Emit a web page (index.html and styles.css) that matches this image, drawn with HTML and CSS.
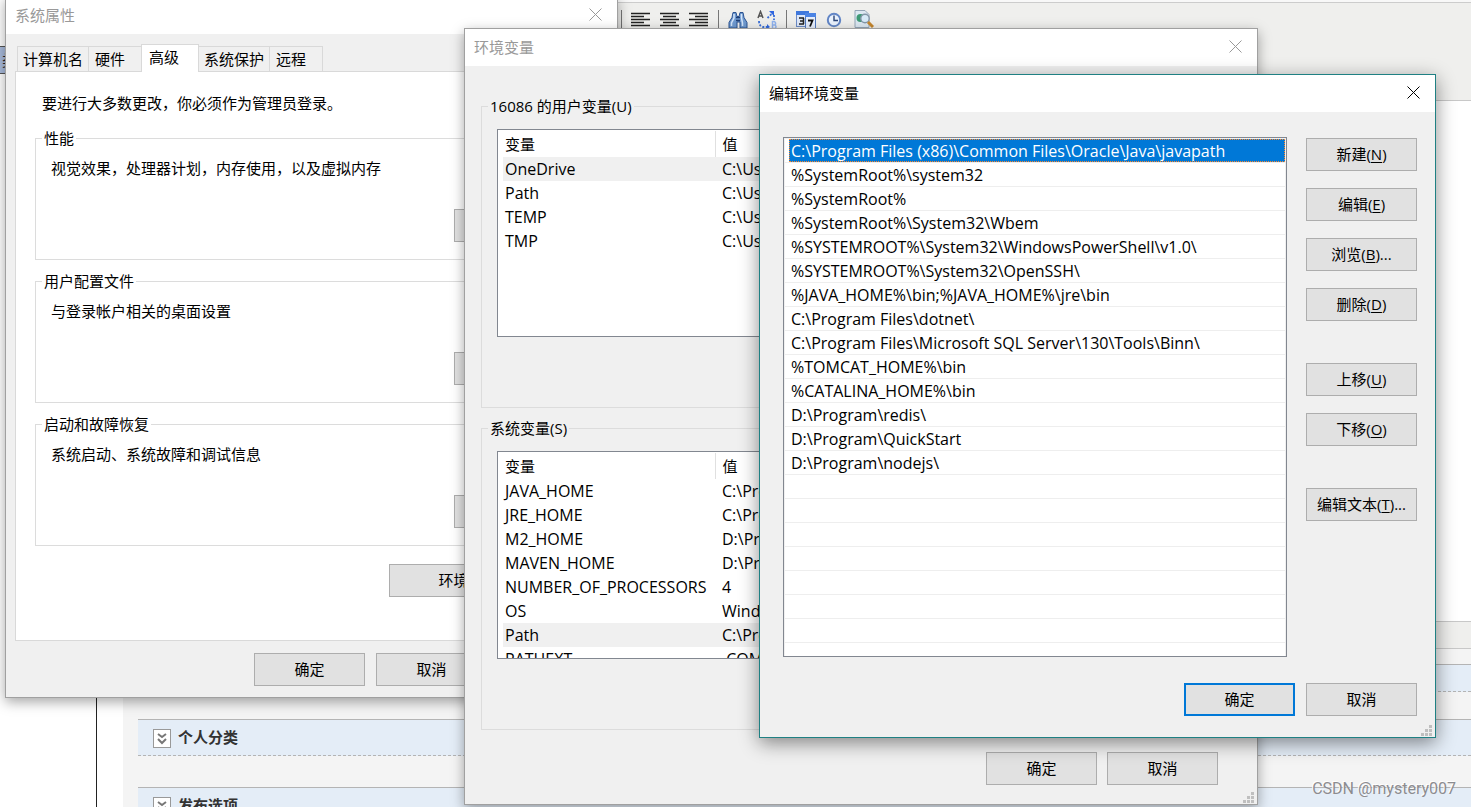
FILE: index.html
```html
<!DOCTYPE html>
<html lang="zh-CN">
<head>
<meta charset="utf-8">
<title>编辑环境变量</title>
<link rel="stylesheet" href="styles.css">
</head>
<body>
<div class="page">
  <nav class="side"><a class="side-link" href="#">类</a></nav>
  <main class="editor">
    <div class="toolbar">
      <span class="sep"></span>
      <svg class="icon" viewBox="0 0 20 20"><path d="M0 3.500h19M0 6.500h13M0 9.500h19M0 12.500h13M0 15.500h19" stroke="#222" stroke-width="1.600"/></svg>
      <svg class="icon" viewBox="0 0 20 20"><path d="M0 3.500h19M3 6.500h13M0 9.500h19M3 12.500h13M0 15.500h19" stroke="#222" stroke-width="1.600"/></svg>
      <svg class="icon" viewBox="0 0 20 20"><path d="M0 3.500h19M6 6.500h13M0 9.500h19M6 12.500h13M0 15.500h19" stroke="#222" stroke-width="1.600"/></svg>
      <span class="sep"></span>
      <svg class="icon" viewBox="0 0 20 20"><path d="M5 2.500h3l1 4h2l1-4h3l1 5 3 5v5.500h-7v-6h-3v6H1v-5.500l3-5z" fill="#6f9ad0" stroke="#2b5290" stroke-width="1"/><path d="M6 4v4l-2.500 5v3M13.500 4v4l1 5v3" stroke="#d5e6fa" stroke-width="1.500" fill="none"/><path d="M8 7.500h4M8 10.500h4" stroke="#1f3f74" stroke-width="1.500"/></svg>
      <svg class="icon" viewBox="0 0 20 20"><path d="M1 8l2.500-6.500L6 8M2 6h3" stroke="#555" stroke-width="1.500" fill="none"/><path d="M2 11q0 5 4 6h5" stroke="#3a6fd8" stroke-width="1.800" stroke-dasharray="2 1.500" fill="none"/><path d="M10 14l3 3-3 2zM12 1h5v5z" fill="#2f66e0"/><path d="M10.500 8l5-5M17 5v5" stroke="#3a6fd8" stroke-width="1.800" stroke-dasharray="2 1.500"/><path d="M15.500 11.500v7h2.500q2-2 0-3.500 1.500-2-.5-3.500zM15.500 15h3" stroke="#8fb2ee" stroke-width="1.500" fill="none"/></svg>
      <span class="sep"></span>
      <svg class="icon" viewBox="0 0 20 20"><rect x=".5" y="1.500" width="12" height="15" fill="#dfe8f8" stroke="#6c8cc8"/><path d="M0 1h13v4H0z" fill="#3f78dc"/><path d="M3 8h5M4 11h4M3 14h5M7.500 8v6" stroke="#222" stroke-width="1.500"/><rect x="9.500" y="4.500" width="10" height="14" fill="#e6eefc" stroke="#5078c0"/><path d="M9 3h11v4H9z" fill="#4c84e4"/><path d="M12 10.500h4.500l-2.500 6" stroke="#111" stroke-width="1.800" fill="none"/></svg>
      <svg class="icon" viewBox="0 0 20 20"><circle cx="9" cy="10" r="6.200" fill="#eaf2fd" stroke="#6286c6" stroke-width="2"/><path d="M9 5.500v5h4" stroke="#2b4678" stroke-width="1.400" fill="none"/></svg>
      <svg class="icon" viewBox="0 0 20 20"><path d="M1 .5h10l4 4v13H1z" fill="#dce8f2" stroke="#93a5b6"/><circle cx="6.500" cy="8" r="4" fill="#3d9a75"/><circle cx="11" cy="8.500" r="4.200" fill="#d8ebf8" stroke="#8497a9" stroke-width="1.400"/><path d="M14 12l5 5" stroke="#c5862d" stroke-width="3"/></svg>
    </div>
    <div class="canvas"></div>
    <div class="status"></div>
    <section class="options">
      <div class="bar bar-short"></div>
      <div class="bar"><svg class="fold" viewBox="0 0 18 18"><rect x=".5" y=".5" width="17" height="18" fill="#fff" stroke="#999"/><path d="M5 5l4 3 4-3M5 10l4 4 4-4" fill="none" stroke="#777" stroke-width="2"/></svg><span>个人分类</span></div>
      <div class="bar"><svg class="fold" viewBox="0 0 18 18"><rect x=".5" y=".5" width="17" height="18" fill="#fff" stroke="#999"/><path d="M5 5l4 3 4-3M5 10l4 4 4-4" fill="none" stroke="#777" stroke-width="2"/></svg><span>发布选项</span></div>
    </section>
  </main>
</div>

<section class="window props">
  <header class="title">系统属性<button class="close" aria-label="关闭"><svg viewBox="0 0 13 13"><path d="M.5.5l12 12M12.500.5l-12 12"/></svg></button></header>
  <div class="tabs" role="tablist">
    <button class="tab" role="tab">计算机名</button>
    <button class="tab tab-mid" role="tab">硬件</button>
    <button class="tab tab-on" role="tab" aria-selected="true">高级</button>
    <button class="tab" role="tab">系统保护</button>
    <button class="tab tab-mid" role="tab">远程</button>
  </div>
  <div class="panel">
    <p class="note">要进行大多数更改，你必须作为管理员登录。</p>
    <fieldset class="group">
      <legend>性能</legend>
      <p>视觉效果，处理器计划，内存使用，以及虚拟内存</p>
      <button class="btn" aria-label="性能设置"></button>
    </fieldset>
    <fieldset class="group">
      <legend>用户配置文件</legend>
      <p>与登录帐户相关的桌面设置</p>
      <button class="btn" aria-label="用户配置文件设置"></button>
    </fieldset>
    <fieldset class="group">
      <legend>启动和故障恢复</legend>
      <p>系统启动、系统故障和调试信息</p>
      <button class="btn" aria-label="启动和故障恢复设置"></button>
    </fieldset>
    <button class="btn btn-wide">环境变量(N)...</button>
  </div>
  <footer class="actions"><button class="btn">确定</button><button class="btn">取消</button></footer>
</section>

<section class="window vars">
  <header class="title">环境变量<button class="close" aria-label="关闭"><svg viewBox="0 0 13 13"><path d="M.5.5l12 12M12.500.5l-12 12"/></svg></button></header>
  <div class="groups">
    <fieldset class="group">
      <legend>16086 的用户变量(U)</legend>
      <div class="list">
        <table class="grid">
          <thead><tr><th>变量</th><th>值</th></tr></thead>
          <tbody>
            <tr class="picked"><td>OneDrive</td><td>C:\Users</td></tr>
            <tr><td>Path</td><td>C:\Users</td></tr>
            <tr><td>TEMP</td><td>C:\Users</td></tr>
            <tr><td>TMP</td><td>C:\Users</td></tr>
          </tbody>
        </table>
      </div>
    </fieldset>
    <fieldset class="group">
      <legend>系统变量(S)</legend>
      <div class="list">
        <table class="grid">
          <thead><tr><th>变量</th><th>值</th></tr></thead>
          <tbody>
            <tr><td>JAVA_HOME</td><td>C:\Program</td></tr>
            <tr><td>JRE_HOME</td><td>C:\Program</td></tr>
            <tr><td>M2_HOME</td><td>D:\Program</td></tr>
            <tr><td>MAVEN_HOME</td><td>D:\Program</td></tr>
            <tr><td>NUMBER_OF_PROCESSORS</td><td>4</td></tr>
            <tr><td>OS</td><td>Windows</td></tr>
            <tr class="picked"><td>Path</td><td>C:\Program</td></tr>
            <tr><td>PATHEXT</td><td>.COM</td></tr>
          </tbody>
        </table>
      </div>
    </fieldset>
  </div>
  <footer class="actions"><button class="btn">确定</button><button class="btn">取消</button></footer>
  <svg class="grip" viewBox="0 0 11 11"><path d="M8 0h3v3H8zM4 4h3v3H4zM8 4h3v3H8zM0 8h3v3H0zM4 8h3v3H4zM8 8h3v3H8z"/></svg>
</section>

<section class="window edit">
  <header class="title">编辑环境变量<button class="close" aria-label="关闭"><svg viewBox="0 0 13 13"><path d="M.5.5l12 12M12.500.5l-12 12"/></svg></button></header>
  <div class="edit-body">
    <ul class="paths" role="listbox" aria-label="路径">
      <li class="chosen" role="option" aria-selected="true">C:\Program Files (x86)\Common Files\Oracle\Java\javapath</li>
      <li role="option">%SystemRoot%\system32</li>
      <li role="option">%SystemRoot%</li>
      <li role="option">%SystemRoot%\System32\Wbem</li>
      <li role="option">%SYSTEMROOT%\System32\WindowsPowerShell\v1.0\</li>
      <li role="option">%SYSTEMROOT%\System32\OpenSSH\</li>
      <li role="option">%JAVA_HOME%\bin;%JAVA_HOME%\jre\bin</li>
      <li role="option">C:\Program Files\dotnet\</li>
      <li role="option">C:\Program Files\Microsoft SQL Server\130\Tools\Binn\</li>
      <li role="option">%TOMCAT_HOME%\bin</li>
      <li role="option">%CATALINA_HOME%\bin</li>
      <li role="option">D:\Program\redis\</li>
      <li role="option">D:\Program\QuickStart</li>
      <li role="option">D:\Program\nodejs\</li>
    </ul>
    <div class="side-buttons">
      <div class="stack">
        <button class="btn">新建(<u>N</u>)</button>
        <button class="btn">编辑(<u>E</u>)</button>
        <button class="btn">浏览(<u>B</u>)...</button>
        <button class="btn">删除(<u>D</u>)</button>
      </div>
      <div class="stack">
        <button class="btn">上移(<u>U</u>)</button>
        <button class="btn">下移(<u>O</u>)</button>
      </div>
      <div class="stack">
        <button class="btn">编辑文本(<u>T</u>)...</button>
      </div>
    </div>
  </div>
  <footer class="actions"><button class="btn btn-default">确定</button><button class="btn">取消</button></footer>
  <svg class="grip" viewBox="0 0 11 11"><path d="M8 0h3v3H8zM4 4h3v3H4zM8 4h3v3H8zM0 8h3v3H0zM4 8h3v3H4zM8 8h3v3H8z"/></svg>
</section>
<div class="watermark">CSDN @mystery007</div>
</body>
</html>
```
FILE: styles.css
```css
* { box-sizing: border-box; }
body {
  margin: 0;
  height: 100vh;
  position: relative;
  overflow: hidden;
  font: 15px/20px "Open Sans", "Noto Sans CJK SC", sans-serif;
  color: #000;
  background: #fff;
}
p, ul { margin: 0; padding: 0; list-style: none; }
button { font: inherit; color: inherit; padding: 0; margin: 0; }

/* page behind the dialogs */
.page { display: flex; height: 100%; overflow: hidden; }
.side { width: 97px; flex: none; border-right: 1px solid #222; padding-top: 46px; }
.side-link {
  display: block;
  height: 28px;
  padding-left: 2px;
  border: 1px solid #555;
  border-left: 0;
  background: #a9bbdc;
  color: #222;
  line-height: 26px;
  text-decoration: none;
}
.editor { flex: 1; display: flex; flex-direction: column; margin-left: 26px; background: #f4f4f4; }
.toolbar {
  flex: none;
  height: 101px;
  padding: 7px 0 0 498px;
  display: flex;
  align-items: flex-start;
  gap: 9px;
  background: #efefed;
  border-top: 2px solid #f8f8f8;
  border-bottom: 1px solid #c8c8c8;
  box-shadow: inset 0 1px #ccc;
}
.icon { width: 20px; height: 20px; flex: none; margin-top: 1px; }
.sep { width: 1px; height: 20px; background: #777; margin-top: 1px; }
.canvas { flex: none; height: 520px; background: #fff; }
.status { flex: none; height: 28px; background: #efefed; border: solid #c8c8c8; border-width: 1px 0; }
.options { padding: 15px 0 0 15px; display: flex; flex-direction: column; }
.bar {
  flex: none;
  height: 37px;
  margin-bottom: 31px;
  padding-left: 15px;
  display: flex;
  align-items: center;
  gap: 7px;
  font-weight: bold;
  color: #333;
  background: #e4edf7;
  border-top: 1px solid #b4b4b4;
  border-bottom: 1px dashed #b4b4b4;
}
.bar span { padding-bottom: 2px; }
.bar-short { height: 28px; margin-bottom: 27px; }
.fold { width: 18px; height: 18px; overflow: visible; }

/* dialogs */
.window { position: absolute; background: #f0f0f0; border: 1px solid #a0a0a0; box-shadow: 0 4px 12px rgba(0, 0, 0, .35); }
.props { left: 5px; top: -4px; width: 613px; }
.vars { left: 464px; top: 28px; width: 794px; }
.edit { left: 759px; top: 74px; width: 677px; border-color: #1f8083; box-shadow: 0 5px 18px rgba(0, 0, 0, .45); }
.title {
  height: 37px;
  padding: 0 15px 2px 9px;
  display: flex;
  align-items: center;
  justify-content: space-between;
  background: #fff;
  color: #999;
}
.edit .title { color: #000; }
.close { display: flex; border: 0; background: none; }
.close svg { width: 13px; height: 13px; fill: none; stroke: currentColor; }
.grip { position: absolute; right: 3px; bottom: 1px; width: 11px; height: 11px; fill: #bfbfbf; }
.btn { width: 111px; height: 33px; padding-bottom: 2px; background: #e1e1e1; border: 1px solid #adadad; text-align: center; }
.btn u { text-underline-offset: 2px; }
.btn-wide { width: 191px; }
.btn-default { border: 2px solid #0078d7; }
.actions { display: flex; gap: 11px; }
.group { min-width: 0; margin: 0; border: 1px solid #dcdcdc; }
.group legend { margin-left: -9px; padding: 0 2px; }

/* system properties */
.tabs { display: flex; align-items: flex-end; height: 37px; padding-left: 11px; }
.tab {
  width: 72px;
  height: 25px;
  background: #f0f0f0;
  border: 1px solid #d9d9d9;
  border-bottom: 0;
  margin-right: -1px;
  padding-left: 5px;
  text-align: left;
  white-space: nowrap;
}
.tab-mid { width: 54px; padding-left: 6px; }
.tab-on {
  position: relative;
  width: 58px;
  height: 28px;
  padding: 0 0 4px 7px;
  background: #fff;
  margin-bottom: -1px;
}
.panel { margin: 0 14px 0 9px; padding: 21px 19px 43px; background: #fff; border: 1px solid #d9d9d9; display: flex; flex-direction: column; }
.note { padding-left: 7px; margin-bottom: 15px; }
.panel .group { margin-bottom: 11px; padding: 10px 17px 17px 15px; }
.panel .group .btn { display: block; margin: 31px 0 0 auto; }
.btn-wide { align-self: flex-end; margin-top: 7px; margin-right: 3px; }
.props .actions { padding: 12px 0 11px 248px; }

/* environment variables */
.groups { padding: 30px 16px 0; display: flex; flex-direction: column; gap: 10px; }
.groups .group { padding: 13px 15px 70px; }
.list { height: 208px; padding: 1px 1px 1px 5px; background: #fff; border: 1px solid #828790; overflow: hidden; }
.grid { width: 100%; table-layout: fixed; border-collapse: collapse; }
.grid th, .grid td { height: 24px; padding: 0 0 0 2px; text-align: left; font-weight: normal; white-space: nowrap; }
.grid td { font-size: 16px; }
.grid th { height: 26px; }
.grid th + th, .grid td + td { padding-left: 7px; }
.grid th:first-child { width: 212px; border-right: 1px solid #e0e0e0; }
.picked { background: #f0f0f0; }
.vars .actions { justify-content: flex-end; gap: 10px; padding: 22px 39px 19px 0; }

/* edit environment variable */
.edit-body { display: flex; gap: 19px; padding: 25px 18px 0 23px; }
.paths {
  flex: 1;
  height: 520px;
  padding: 1px 1px 0;
  border: 1px solid #828790;
  background: #fff repeating-linear-gradient(#fff 0 23px, #eee 23px 24px) content-box;
  overflow: hidden;
}
.paths li { height: 23px; margin: 0 0 1px 4px; padding-left: 2px; font-size: 16px; line-height: 24px; white-space: nowrap; }
.paths .chosen { color: #fff; background: #0078d7; outline: 1px dotted #ff8728; outline-offset: -1px; }
.side-buttons { display: flex; flex-direction: column; gap: 42px; padding-top: 1px; }
.stack { display: flex; flex-direction: column; gap: 17px; }
.edit .actions { justify-content: flex-end; padding: 26px 18px 21px 0; }

.watermark {
  position: absolute;
  right: 15px;
  bottom: 8px;
  font: 16px/20px Roboto, sans-serif;
  color: #8c8c90;
  text-shadow: -1px -1px #fff;
}
```
